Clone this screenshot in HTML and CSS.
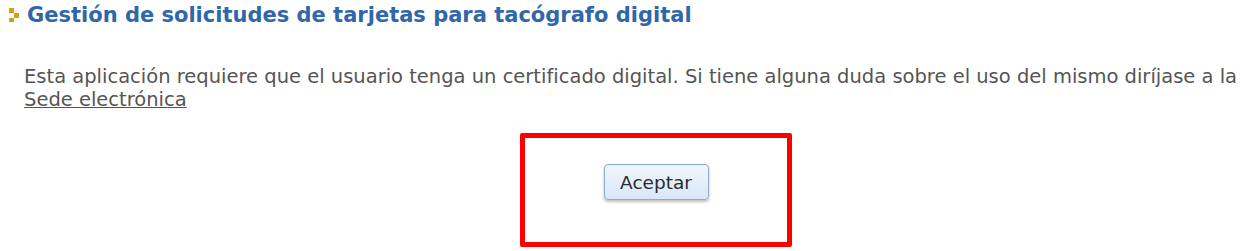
FILE: index.html
```html
<!DOCTYPE html>
<html lang="es">
<head>
<meta charset="utf-8">
<title>Gestión de solicitudes de tarjetas para tacógrafo digital</title>
<link rel="stylesheet" href="styles.css">
</head>
<body>
<div class="page">
  <h1 class="title">
    <svg class="bullet" width="11" height="14" viewBox="0 0 11 14" aria-hidden="true">
      <rect x="0" y="0" width="5" height="5" fill="#d6a10f"/>
      <rect x="5" y="5" width="5" height="5" fill="#d6a10f"/>
      <rect x="0" y="10" width="5" height="4" fill="#d6a10f"/>
    </svg>
    <span>Gestión de solicitudes de tarjetas para tacógrafo digital</span>
  </h1>
  <p class="info">Esta aplicación requiere que el usuario tenga un certificado digital. Si tiene alguna duda sobre el uso del mismo diríjase a la <a href="#" class="link">Sede electrónica</a></p>
  <div class="actions">
    <div class="highlight">
      <button class="btn" type="button">Aceptar</button>
    </div>
  </div>
</div>
</body>
</html>
```

FILE: styles.css
```css
html, body {
  margin: 0;
  padding: 0;
  background: #ffffff;
}
.page {
  font-family: Verdana, "DejaVu Sans", sans-serif;
}
.title {
  display: flex;
  align-items: center;
  gap: 7px;
  margin: 0;
  padding: 2px 0 0 9px;
  height: 26px;
  font-size: 21px;
  font-weight: bold;
  color: #2f67a9;
  line-height: 26px;
}
.bullet {
  flex: none;
}
.info {
  margin: 37px 0 0 24px;
  font-size: 19.5px;
  line-height: 23px;
  color: #555555;
}
.link {
  color: #555555;
  text-decoration: underline;
}
.actions {
  display: flex;
  justify-content: center;
  padding-left: 52px;
  margin-top: 22px;
}
.highlight {
  box-sizing: border-box;
  width: 272px;
  height: 114px;
  border: 5px solid #ff0000;
  border-radius: 2px;
  display: flex;
  justify-content: center;
  align-items: flex-start;
  padding-top: 26px;
}
.btn {
  box-sizing: border-box;
  width: 105px;
  height: 36px;
  padding: 0;
  font-family: Verdana, "DejaVu Sans", sans-serif;
  font-size: 18.5px;
  color: #2b2b2b;
  border: 1px solid #8eaad0;
  border-radius: 4px;
  background: linear-gradient(#f1f6fd, #d8e7f9);
  box-shadow: 0 2px 3px rgba(0, 0, 0, 0.25);
}
```
